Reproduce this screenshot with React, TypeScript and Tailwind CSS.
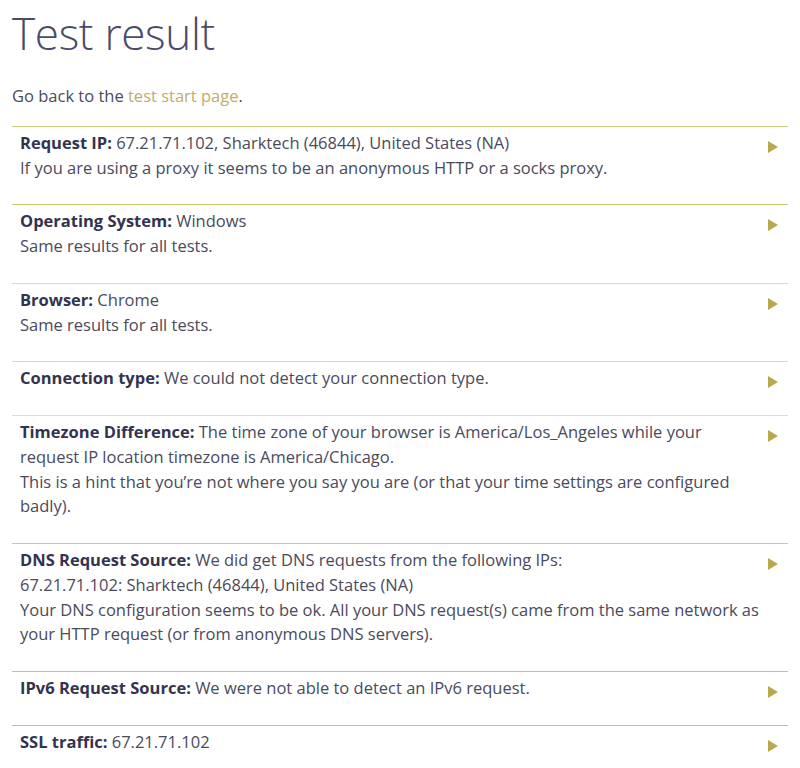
import React from "react";

type Row = { color: string; label: string; lines: React.ReactNode[] };

const rows: Row[] = [
  {
    color: "#c9cb7f",
    label: "Request IP:",
    lines: [
      " 67.21.71.102, Sharktech (46844), United States (NA)",
      "If you are using a proxy it seems to be an anonymous HTTP or a socks proxy.",
    ],
  },
  { color: "#c5c96e", label: "Operating System:", lines: [" Windows", "Same results for all tests."] },
  { color: "#d3e2a4", label: "Browser:", lines: [" Chrome", "Same results for all tests."] },
  { color: "#d6d6d6", label: "Connection type:", lines: [" We could not detect your connection type."] },
  {
    color: "#ece38c",
    label: "Timezone Difference:",
    lines: [
      " The time zone of your browser is America/Los_Angeles while your request IP location timezone is America/Chicago.",
      "This is a hint that you\u2019re not where you say you are (or that your time settings are configured badly).",
    ],
  },
  {
    color: "#c9cf80",
    label: "DNS Request Source:",
    lines: [
      " We did get DNS requests from the following IPs:",
      "67.21.71.102: Sharktech (46844), United States (NA)",
      "Your DNS configuration seems to be ok. All your DNS request(s) came from the same network as your HTTP request (or from anonymous DNS servers).",
    ],
  },
  { color: "#c9c27a", label: "IPv6 Request Source:", lines: [" We were not able to detect an IPv6 request."] },
  { color: "#c9c27a", label: "SSL traffic:", lines: [" 67.21.71.102"] },
];

function Arrow() {
  return (
    <svg width="10" height="12" viewBox="0 0 10 12" className="shrink-0 mt-[10px] mr-[10px]">
      <path d="M0 0 L10 6 L0 12 Z" fill="#b9a94c" />
    </svg>
  );
}

export default function App() {
  return (
    <div
      className="bg-white min-h-[768px] px-[12px] text-[16.5px] leading-[1.5] text-[#4a4a5c]"
      style={{ fontFamily: '"Open Sans", "Noto Sans", sans-serif' }}
    >
      <h1 className="text-[44px] leading-[60px] font-light text-[#4b4b68] pt-[3px] m-0 tracking-[-0.3px]">
        Test result
      </h1>
      <p className="mt-[21px] mb-[17px]">
        Go back to the <a className="text-[#bfae68]">test start page</a>.
      </p>
      {rows.map((r, i) => (
        <div key={i} className="flex items-start border-t pt-[4px] pb-[24px] pl-[8px]" style={{ borderColor: r.color }}>
          <div className="flex-1 pr-[8px]">
            <p>
              <b className="font-bold text-[#33334f]">{r.label}</b>
              {r.lines[0]}
            </p>
            {r.lines.slice(1).map((l, j) => (
              <p key={j}>{l}</p>
            ))}
          </div>
          <Arrow />
        </div>
      ))}
    </div>
  );
}
